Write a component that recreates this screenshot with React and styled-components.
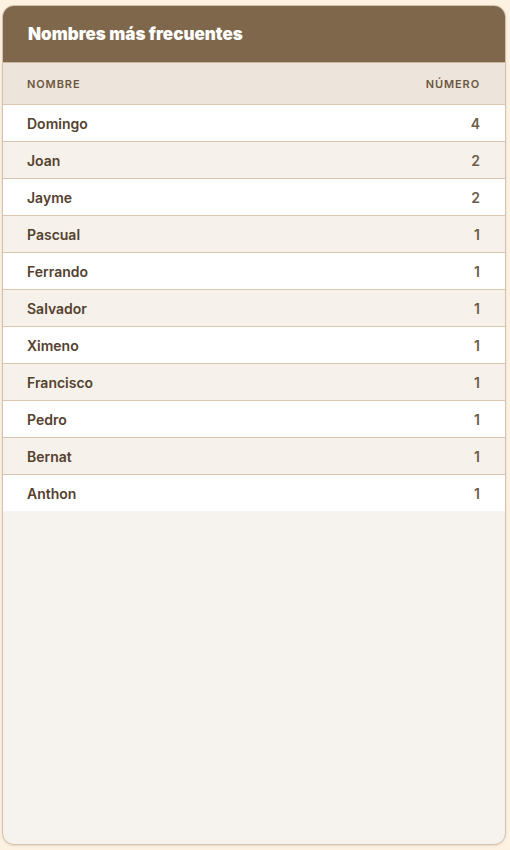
import React from "react";
import styled, { createGlobalStyle } from "styled-components";

const GlobalStyle = createGlobalStyle`
  html, body {
    margin: 0;
    padding: 0;
    background: #fdf1e1;
    font-family: Inter, "Noto Sans", sans-serif;
  }
`;

const Page = styled.div`
  padding: 5px 4px 5px 2px;
  height: 850px;
  box-sizing: border-box;
  display: flex;
`;

const Card = styled.section`
  flex: 1;
  display: flex;
  flex-direction: column;
  background: #f6f2ed;
  border: 1px solid #d3c1ae;
  border-radius: 12px;
  overflow: hidden;
  box-shadow: 0 1px 2px rgba(120, 90, 60, 0.15);
`;

const Header = styled.header`
  background: #7e674b;
  height: 56px;
  display: flex;
  align-items: center;
  padding: 0 25px;
  border-bottom: 1px solid #cdb79f;
`;

const Title = styled.h2`
  margin: 0;
  color: #ffffff;
  font-size: 17px;
  font-weight: 900;
  letter-spacing: 0;
`;

const Row = styled.div`
  display: flex;
  justify-content: space-between;
  align-items: center;
  height: ${(p) => (p.head ? "41px" : "36px")};
  padding: 0 25px 0 24px;
  background: ${(p) => (p.head ? "#ede5dc" : p.alt ? "#f6f1eb" : "#ffffff")};
  border-bottom: 1px solid #dcc6b0;
  &:last-child {
    border-bottom: none;
  }
`;

const HeadCell = styled.span`
  font-size: 11px;
  font-weight: 600;
  letter-spacing: 0.9px;
  text-transform: uppercase;
  color: #6b5740;
`;

const Cell = styled.span`
  font-size: 14px;
  font-weight: 600;
  color: #54412e;
`;

const Num = styled(Cell)`
  color: #6f5b46;
`;

const data = [
  ["Domingo", 4],
  ["Joan", 2],
  ["Jayme", 2],
  ["Pascual", 1],
  ["Ferrando", 1],
  ["Salvador", 1],
  ["Ximeno", 1],
  ["Francisco", 1],
  ["Pedro", 1],
  ["Bernat", 1],
  ["Anthon", 1],
];

export default function App() {
  return (
    <>
      <GlobalStyle />
      <Page>
        <Card>
          <Header>
            <Title>Nombres más frecuentes</Title>
          </Header>
          <div>
            <Row head>
              <HeadCell>Nombre</HeadCell>
              <HeadCell>Número</HeadCell>
            </Row>
            {data.map(([name, n], i) => (
              <Row key={name} alt={i % 2 === 1}>
                <Cell>{name}</Cell>
                <Num>{n}</Num>
              </Row>
            ))}
          </div>
        </Card>
      </Page>
    </>
  );
}
